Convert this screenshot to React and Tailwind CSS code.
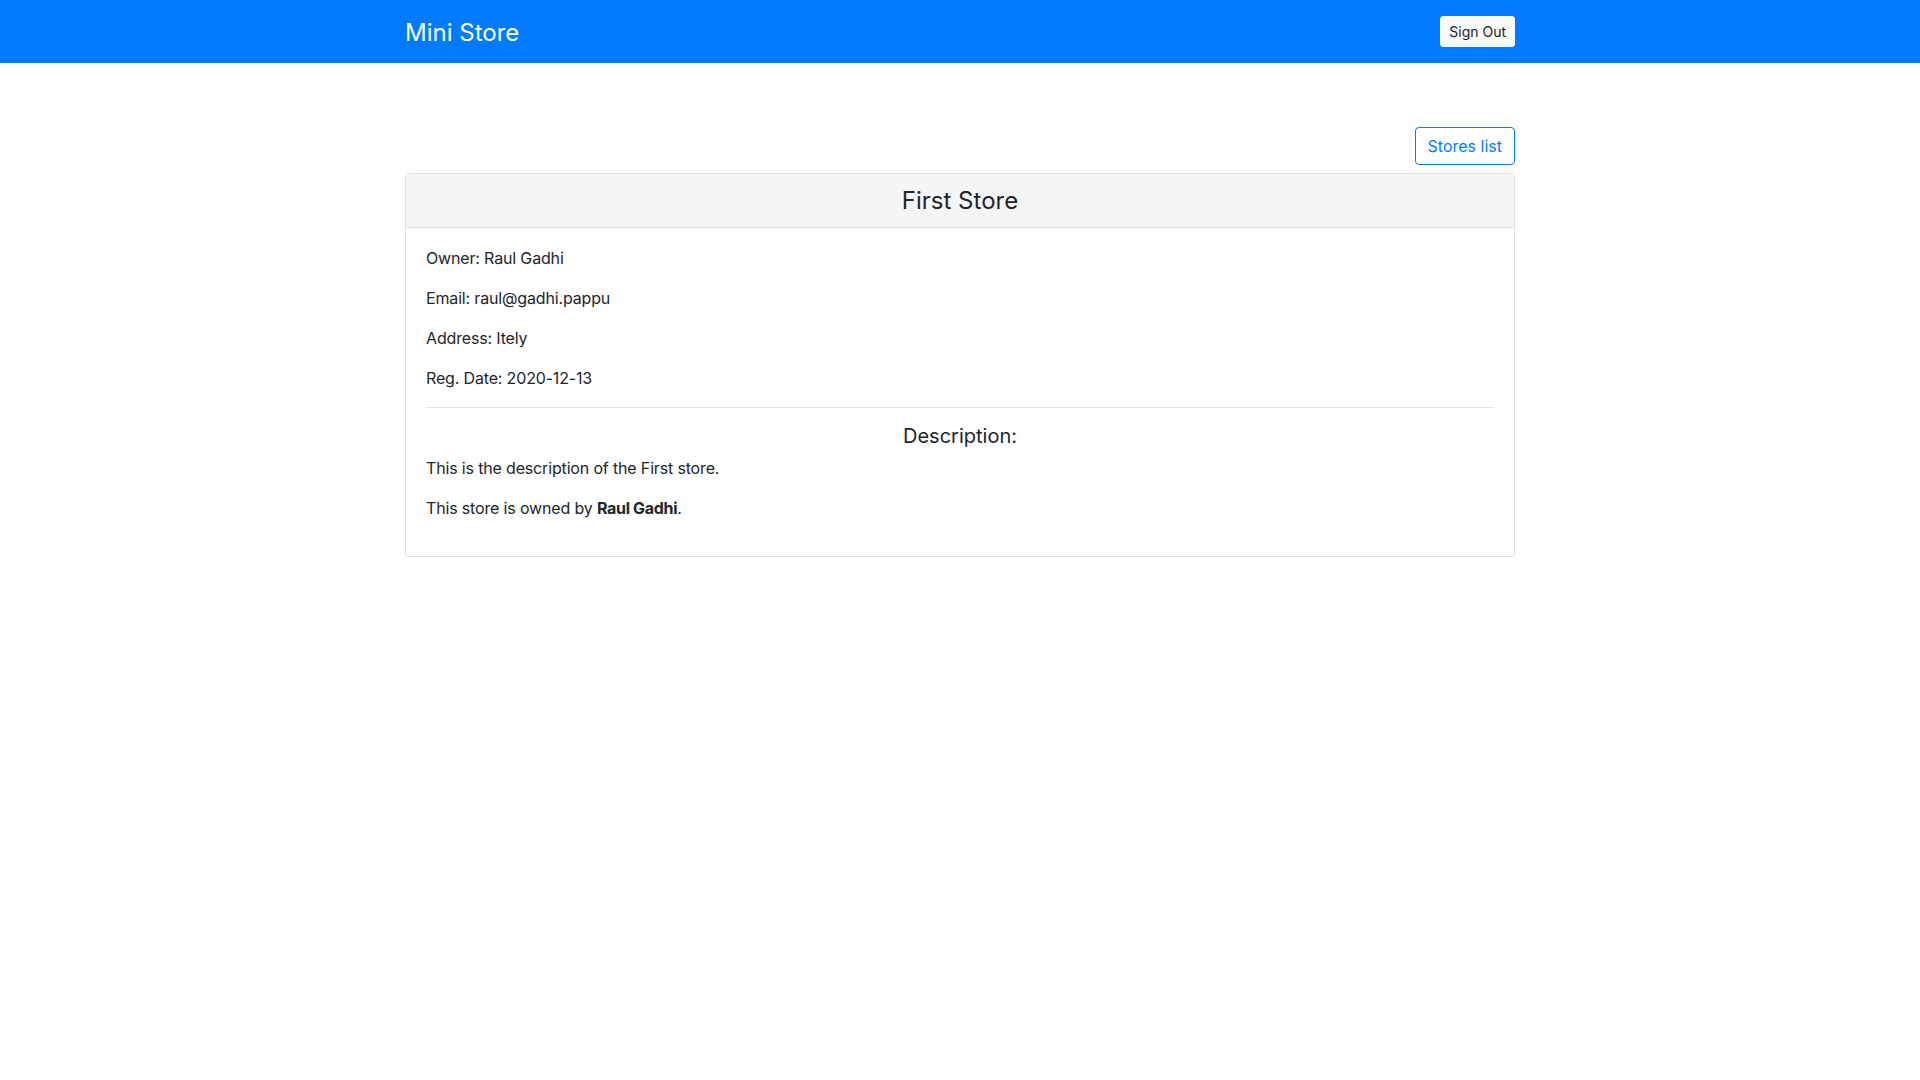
export default function App() {
  return (
    <div className="min-h-screen bg-white text-[#212529]" style={{ fontFamily: "Inter, Roboto, 'Liberation Sans', sans-serif" }}>
      <nav className="h-[63px] bg-[#007bff]">
        <div className="mx-auto flex h-full w-[1110px] items-center justify-between">
          <span className="mt-[3px] text-[24px] leading-[28px] text-white">Mini Store</span>
          <button className="h-[31px] rounded-[3px] border border-[#f8f9fa] bg-[#f8f9fa] px-2 text-[14px] leading-[21px] text-[#212529]">
            Sign Out
          </button>
        </div>
      </nav>
      <main className="mx-auto w-[1110px] pt-[64px]">
        <div className="mb-2 flex justify-end">
          <button className="h-[38px] rounded-[4px] border border-[#007bff] px-3 text-[16px] leading-[24px] text-[#007bff]">
            Stores list
          </button>
        </div>
        <div className="rounded-[4px] border border-[#dfdfdf]">
          <div className="border-b border-[#dfdfdf] bg-[#f5f5f5] pb-3 pt-[13px] text-center">
            <h4 className="text-[24px] leading-[28px]">First Store</h4>
          </div>
          <div className="px-5 pb-5 pt-[18px] text-[16px] leading-[24px] tracking-[-0.01em]">
            <p className="mb-4">Owner: Raul Gadhi</p>
            <p className="mb-4">Email: raul@gadhi.pappu</p>
            <p className="mb-4">Address: Itely</p>
            <p>Reg. Date: 2020-12-13</p>
            <hr className="mb-4 mt-[17px] border-t border-[#e5e5e5]" />
            <h5 className="mb-2 text-center text-[20px] leading-[24px] tracking-normal">Description:</h5>
            <p className="mb-4">This is the description of the First store.</p>
            <p className="mb-4">
              This store is owned by <b className="font-bold tracking-[-0.02em]">Raul Gadhi</b>.
            </p>
          </div>
        </div>
      </main>
    </div>
  );
}
